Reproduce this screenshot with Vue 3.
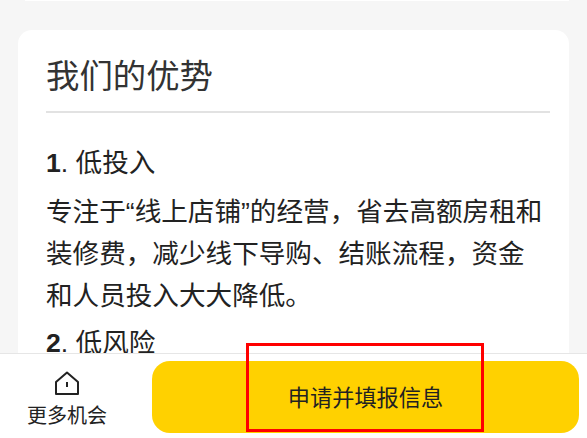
<script setup>
const points = [
  {
    title: '低投入',
    text: '专注于“线上店铺”的经营，省去高额房租和装修费，减少线下导购、结账流程，资金和人员投入大大降低。'
  },
  { title: '低风险', text: '' }
]
</script>

<template>
  <div class="page">
    <div class="prev-card"></div>
    <section class="card">
      <h2 class="card-title">我们的优势</h2>
      <div v-for="(p, i) in points" :key="p.title" class="point">
        <h3><b>{{ i + 1 }}</b>. {{ p.title }}</h3>
        <p v-if="p.text">{{ p.text }}</p>
      </div>
    </section>

    <footer class="bottom-bar">
      <div class="more">
        <svg width="26" height="26" viewBox="0 0 26 26" fill="none" stroke="#222" stroke-width="2">
          <path d="M13 2.5 L24 12 V24 H2 V12 Z" stroke-linejoin="round" />
          <path d="M13 12 V17" />
        </svg>
        <span>更多机会</span>
      </div>
      <button class="apply">申请并填报信息</button>
    </footer>
    <div class="highlight"></div>
  </div>
</template>

<style scoped>
.page {
  position: relative;
  width: 587px;
  height: 438px;
  overflow: hidden;
  background: #f6f6f6;
  font-family: "Liberation Sans", "Noto Sans CJK SC", sans-serif;
  color: #222;
}

.prev-card {
  height: 1px;
  margin: 0 18px 29px 25px;
  background: #fff;
}

.card {
  margin: 0 18px;
  padding: 24px 19px 0 28px;
  height: 500px;
  background: #fff;
  border-radius: 14px;
}

.card-title {
  margin: 0 0 29px;
  padding-bottom: 12px;
  border-bottom: 2px solid #e2e2e2;
  font-size: 33.4px;
  line-height: 45px;
  font-weight: 400;
  color: #333;
}

.point h3 {
  margin: 0 0 7px;
  font-size: 26.6px;
  line-height: 42px;
  font-weight: 400;
}

.point b {
  font-weight: 700;
}

.point p {
  margin: 0 0 5px;
  font-size: 26.6px;
  line-height: 42px;
}

.bottom-bar {
  position: absolute;
  left: 0;
  right: 0;
  bottom: 0;
  height: 85px;
  display: flex;
  align-items: flex-start;
  padding: 7px 8px 0 0;
  box-sizing: border-box;
  background: #fff;
  border-top: 1px solid #e6e6e6;
}

.more {
  width: 152px;
  flex: none;
  display: flex;
  flex-direction: column;
  align-items: center;
  gap: 6px;
  padding: 9px 18px 0 0;
  box-sizing: border-box;
  font-size: 20px;
  line-height: 28px;
}

.apply {
  flex: 1;
  height: 72px;
  padding: 0 0 3px;
  border: none;
  border-radius: 18px;
  background: #ffd100;
  color: #222;
  font-family: inherit;
  font-size: 22.2px;
}

.highlight {
  position: absolute;
  left: 246px;
  top: 343px;
  width: 238px;
  height: 89px;
  box-sizing: border-box;
  border: 3px solid #f00;
}
</style>
